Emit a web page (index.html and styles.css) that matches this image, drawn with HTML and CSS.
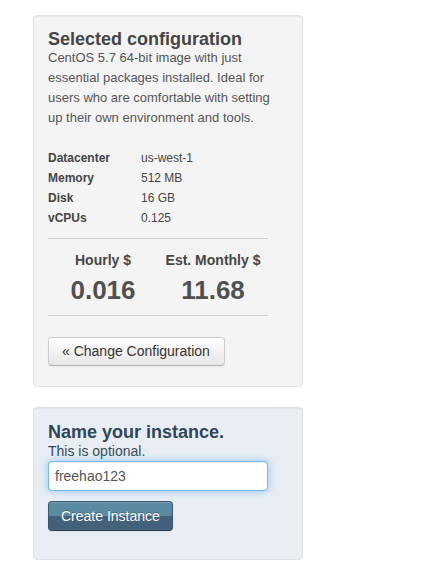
FILE: index.html
```html
<!DOCTYPE html>
<html>
<head>
<meta charset="utf-8">
<link rel="stylesheet" href="styles.css">
</head>
<body>
<div class="page">
  <div class="well config">
    <h3 class="title">Selected configuration</h3>
    <p class="desc">CentOS 5.7 64-bit image with just essential packages installed. Ideal for users who are comfortable with setting up their own environment and tools.</p>
    <table class="specs">
      <tr><th>Datacenter</th><td>us-west-1</td></tr>
      <tr><th>Memory</th><td>512 MB</td></tr>
      <tr><th>Disk</th><td>16 GB</td></tr>
      <tr><th>vCPUs</th><td>0.125</td></tr>
    </table>
    <hr class="rule">
    <div class="prices">
      <div class="price">
        <div class="price-label">Hourly $</div>
        <div class="price-value">0.016</div>
      </div>
      <div class="price">
        <div class="price-label">Est. Monthly $</div>
        <div class="price-value">11.68</div>
      </div>
    </div>
    <hr class="rule">
    <button class="btn">« Change Configuration</button>
  </div>

  <div class="well name">
    <h3 class="name-title">Name your instance.</h3>
    <div class="name-hint">This is optional.</div>
    <input class="name-input" type="text" value="freehao123" autofocus>
    <button class="btn btn-primary">Create Instance</button>
  </div>
</div>
</body>
</html>
```

FILE: styles.css
```css
* { box-sizing: border-box; }
html, body { margin: 0; padding: 0; background: #fff; }
body {
  font-family: "Liberation Sans", Arial, sans-serif;
  font-size: 13px;
  line-height: 20px;
  color: #555;
}
.page {
  padding: 15px 0 0 33px;
  width: 303px;
  display: flex;
  flex-direction: column;
  gap: 20px;
}
.well {
  background: #f4f4f4;
  border: 1px solid #e3e3e3;
  border-radius: 4px;
  box-shadow: inset 0 1px 1px rgba(0,0,0,0.05);
  padding: 14px 14px 20px 14px;
}
.config { display: flex; flex-direction: column; }
.config .rule, .config .prices { align-self: flex-start; }
.title {
  margin: 0;
  font-size: 18px;
  line-height: 18px;
  font-weight: bold;
  color: #454545;
}
.desc {
  margin: 0 0 20px 0;
  width: 222px;
}
.specs {
  border-collapse: collapse;
  font-size: 12px;
  color: #444;
}
.specs th {
  text-align: left;
  font-weight: bold;
  width: 93px;
  padding: 0;
  height: 20px;
}
.specs td { padding: 0; height: 20px; }
.rule {
  width: 220px;
  margin: 10px 0 0 0;
  border: 0;
  border-top: 1px solid #d2d2d2;
  height: 0;
}
.prices {
  width: 220px;
  display: grid;
  grid-template-columns: 1fr 1fr;
  padding: 11px 0 5px 0;
  color: #474747;
}
.price { text-align: center; }
.price-label {
  font-size: 14px;
  font-weight: bold;
  line-height: 20px;
}
.price-value {
  font-size: 26px;
  font-weight: bold;
  line-height: 40px;
  color: #505050;
}
.prices + .rule { margin-top: 0; }
.btn {
  display: inline-block;
  font-family: inherit;
  font-size: 14px;
  line-height: 19px;
  padding: 4px 14px 4px 13px;
  color: #333;
  background: linear-gradient(#ffffff, #e6e6e6);
  border: 1px solid #cccccc;
  border-bottom-color: #b3b3b3;
  border-radius: 4px;
  box-shadow: inset 0 1px 0 rgba(255,255,255,.2), 0 1px 2px rgba(0,0,0,.05);
  cursor: pointer;
  margin-top: 21px;
  align-self: flex-start;
}

.name {
  background: #e9eef4;
  border-color: #d9e0e7;
  padding: 14px 14px 28px 14px;
  display: flex;
  flex-direction: column;
  align-items: flex-start;
}
.name-title {
  margin: 0;
  font-size: 18px;
  line-height: 20px;
  font-weight: bold;
  color: #2f4558;
}
.name-hint {
  font-size: 14px;
  line-height: 19px;
  color: #34495a;
}
.name-input {
  width: 220px;
  height: 30px;
  font-family: inherit;
  font-size: 14px;
  color: #555;
  padding: 4px 6px;
  border: 1px solid rgba(82,168,236,.8);
  border-radius: 4px;
  box-shadow: inset 0 1px 1px rgba(0,0,0,.075), 0 0 8px rgba(82,168,236,.6);
  outline: none;
  background: #fff;
}
.btn-primary {
  margin-top: 10px;
  padding: 4px 12px;
  line-height: 20px;
  color: #fff;
  text-shadow: 0 -1px 0 rgba(0,0,0,.25);
  background: linear-gradient(#5a8ba2 0%, #5a8ba2 50%, #45627c 50%, #42607a 100%);
  border: 1px solid #3b566d;
  border-bottom-color: #2f4457;
}
```
